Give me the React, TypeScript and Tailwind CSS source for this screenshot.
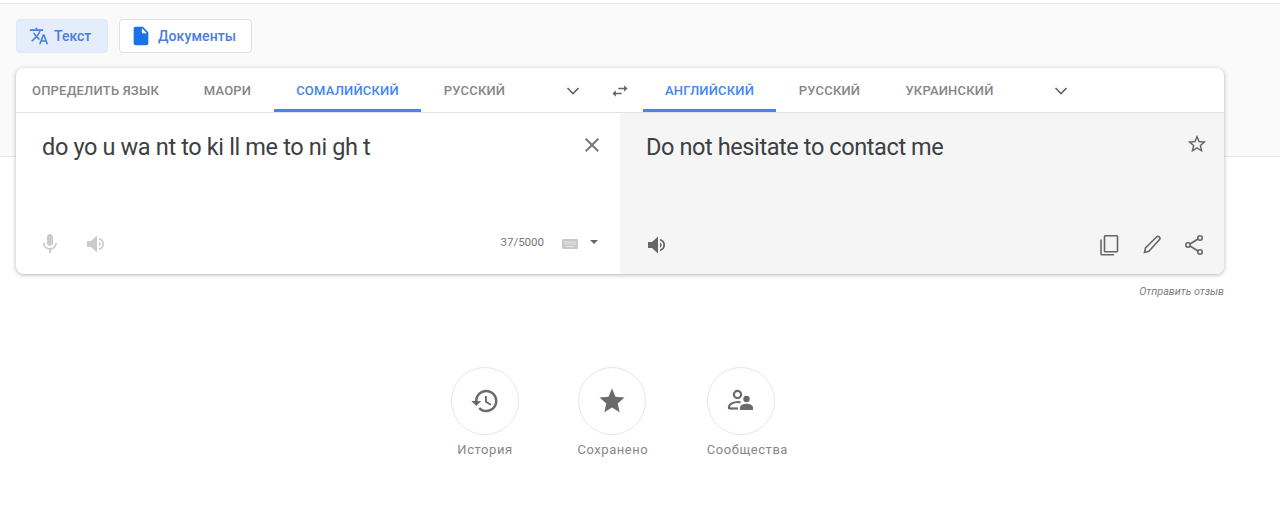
const Ic = ({ d, size = 24, cls = "", vb = "0 0 24 24" }: { d: string; size?: number; cls?: string; vb?: string }) => (
  <svg width={size} height={size} viewBox={vb} fill="currentColor" fillRule="evenodd" className={"shrink-0 " + cls}>
    <path d={d} />
  </svg>
);

const P = {
  translate: "M12.87 15.07l-2.54-2.51.03-.03c1.74-1.94 2.98-4.17 3.71-6.53H17V4h-7V2H8v2H1v1.99h11.17C11.5 7.92 10.42 9.75 9 11.35 8.07 10.32 7.3 9.19 6.69 8h-2c.73 1.63 1.73 3.17 2.98 4.56l-5.09 5.02L4 19l5-5 3.11 3.11.76-2.04zM18.5 10h-2L12 22h2l1.12-3h4.75L21 22h2l-4.5-12zm-2.62 7l1.62-4.33L19.12 17h-3.24z",
  doc: "M14 2H6c-1.1 0-1.99.9-1.99 2L4 20c0 1.1.89 2 1.99 2H18c1.1 0 2-.9 2-2V8l-6-6zm-1 7V3.5L18.5 9H13z",
  swap: "M6.99 11L3 15l3.99 4v-3H14v-2H6.99v-3zM21 9l-3.99-4v3H10v2h7.01v3L21 9z",
  close: "M19 6.41L17.59 5 12 10.59 6.41 5 5 6.41 10.59 12 5 17.59 6.41 19 12 13.41 17.59 19 19 17.59 13.41 12z",
  star: "M22 9.24l-7.19-.62L12 2 9.19 8.63 2 9.24l5.46 4.73L5.82 21 12 17.27 18.18 21l-1.63-7.03L22 9.24zM12 15.4l-3.76 2.27 1-4.28-3.32-2.88 4.38-.38L12 6.1l1.71 4.04 4.38.38-3.32 2.88 1 4.28L12 15.4z",
  starFill: "M12 17.27L18.18 21l-1.64-7.03L22 9.24l-7.19-.61L12 2 9.19 8.63 2 9.24l5.46 4.73L5.82 21z",
  mic: "M12 14c1.66 0 2.99-1.34 2.99-3L15 5c0-1.66-1.34-3-3-3S9 3.34 9 5v6c0 1.66 1.34 3 3 3zm5.3-3c0 3-2.54 5.1-5.3 5.1S6.7 14 6.7 11H5c0 3.41 2.72 6.23 6 6.72V21h2v-3.28c3.28-.48 6-3.3 6-6.72h-1.7z",
  vol: "M2 9v6h4l6 5.5V3.5L6 9H2zm12-3.2v1.8c2 .7 3.3 2.4 3.3 4.4s-1.3 3.7-3.3 4.4v1.8c3-.8 5.1-3.3 5.1-6.2S17 6.6 14 5.8zm0 3.6v5.2c1-.5 1.6-1.5 1.6-2.6S15 9.9 14 9.4z",
  history: "M13 3c-4.97 0-9 4.03-9 9H1l3.89 3.89.07.14L9 12H6c0-3.87 3.13-7 7-7s7 3.13 7 7-3.13 7-7 7c-1.93 0-3.68-.79-4.94-2.06l-1.42 1.42C8.27 19.99 10.51 21 13 21c4.97 0 9-4.03 9-9s-4.03-9-9-9zm-1 5v5l4.28 2.54.72-1.21-3.5-2.08V8H12z",
};

const Chevron = () => (
  <svg width="16" height="10" viewBox="0 0 16 10" fill="none" stroke="#5f6368" strokeWidth="1.6" className="shrink-0">
    <path d="M2.5 2l5.5 5.5L13.5 2" />
  </svg>
);

const Tab = ({ label, active, cls = "" }: { label: string; active?: boolean; cls?: string }) => (
  <div
    className={
      "h-full shrink-0 flex items-center justify-center whitespace-nowrap text-[13px] tracking-[0.2px] font-medium border-b-[3px] pt-[4px] " +
      (active ? "text-[#4285f4] border-[#4285f4] " : "text-[#868686] border-transparent ") +
      cls
    }
  >
    {label}
  </div>
);

const Round = ({ label, children }: { label: string; children: React.ReactNode }) => (
  <div className="flex flex-col items-start">
    <div className="w-[68px] h-[68px] rounded-full border border-[#e6e6e6] bg-white flex items-center justify-center text-[#6a6a6a]">
      {children}
    </div>
    <div className="mt-[7px] min-w-[68px] text-center text-[13px] leading-[16px] tracking-[0.55px] text-[#888] whitespace-nowrap">{label}</div>
  </div>
);

export default function App() {
  return (
    <div className="w-[1280px] h-[508px] bg-white overflow-hidden pt-[3px] font-['Roboto',sans-serif]">
      <div className="h-[154px] bg-[#fafafa] border-y border-[#e8e8e8] pt-[15px] px-4">
        <div className="flex gap-[11px] h-[34px]">
          <div className="w-[92px] rounded-[4px] bg-[#e4edfb] border border-[#dfe8f6] flex items-center pl-[12px] gap-[5px] text-[#4a7de0] text-sm">
            <Ic d={P.translate} size={20} />
            <span className="font-medium">Текст</span>
          </div>
          <div className="w-[133px] rounded-[4px] bg-white border border-[#e0e0e0] flex items-center pl-[10px] gap-[6px] text-[#4a7de0] text-sm">
            <Ic d={P.doc} size={22} cls="text-[#1a73e8]" />
            <span className="font-medium tracking-[0.1px]">Документы</span>
          </div>
        </div>

        <div className="mt-[15px] w-[1208px] h-[206px] rounded-lg bg-white shadow-[0_1px_4px_rgba(0,0,0,0.3)] overflow-hidden flex flex-col">
          <div className="h-[45px] shrink-0 border-b border-[#e3e3e3] flex">
            <div className="w-[604px] shrink-0 flex items-center h-full">
              <Tab label="ОПРЕДЕЛИТЬ ЯЗЫК" cls="w-[165px] pr-[6px]" />
              <Tab label="МАОРИ" cls="w-[93px]" />
              <Tab label="СОМАЛИЙСКИЙ" active cls="w-[147px]" />
              <Tab label="РУССКИЙ" cls="w-[107px]" />
              <div className="w-[30px] shrink-0 ml-[30px] flex justify-center pt-[2px]"><Chevron /></div>
              <div className="w-[20px] shrink-0 ml-[22px] text-[#5f6368] pt-[1px]"><Ic d={P.swap} size={20} /></div>
            </div>
            <div className="w-[604px] shrink-0 flex items-center h-full pl-[23px]">
              <Tab label="АНГЛИЙСКИЙ" active cls="w-[133px]" />
              <Tab label="РУССКИЙ" cls="w-[107px]" />
              <Tab label="УКРАИНСКИЙ" cls="w-[133px]" />
              <div className="w-[30px] shrink-0 ml-[30px] flex justify-center pt-[2px]"><Chevron /></div>
            </div>
          </div>

          <div className="flex-1 flex min-h-0">
            <div className="w-[604px] flex flex-col pl-[26px] pr-[16px]">
              <div className="flex justify-between items-start pt-[19px] h-[120px]">
                <div className="text-[23.5px] leading-[30px] tracking-[-0.36px] text-[#3c4043]">do yo u wa nt to ki ll me to ni gh t</div>
                <Ic d={P.close} size={24} cls="text-[#777] mt-[1px]" />
              </div>
              <div className="flex items-center h-[24px] -ml-[2px]">
                <Ic d={P.mic} size={24} cls="-ml-[2px] text-[#ccc] -mt-[2px]" />
                <Ic d={P.vol} size={24} cls="ml-[23px] text-[#ccc] -mt-[2px]" />
                <span className="ml-auto text-[11.5px] text-[#777] -mt-[5px]">37/5000</span>
                <svg width="16" height="10" viewBox="0 0 16 10" className="ml-[18px] shrink-0 -mt-[2px]">
                  <rect width="16" height="10" rx="1" fill="#c9c9c9" />
                  <path d="M2 3h12M2 5h12M4 7.5h8" stroke="#efefef" strokeWidth="0.8" />
                </svg>
                <svg width="8" height="4" viewBox="0 0 8 4" className="ml-[12px] mr-[6px] -mt-[7px] shrink-0">
                  <path d="M0 0h8L4 4z" fill="#666" />
                </svg>
              </div>
            </div>
            <div className="w-[604px] bg-[#f5f5f5] flex flex-col pl-[26px] pr-[18px]">
              <div className="flex justify-between items-start pt-[19px] h-[120px]">
                <div className="text-[23.5px] leading-[30px] tracking-[-0.4px] text-[#3c4043]">Do not hesitate to contact me</div>
                <Ic d={P.star} size={22} cls="text-[#666] mt-[1px] -mr-[2px]" />
              </div>
              <div className="flex items-center h-[24px]">
                <Ic d={P.vol} size={24} cls="text-[#666]" />
                <svg width="24" height="24" viewBox="0 0 24 24" fill="none" stroke="#666" strokeWidth="1.6" className="ml-auto shrink-0">
                  <rect x="7.5" y="2.8" width="13" height="16" rx="0.8" />
                  <path d="M4 6.5v14.2c0 .6.4 1 1 1h12" />
                </svg>
                <svg width="24" height="24" viewBox="0 0 24 24" fill="none" stroke="#666" strokeWidth="1.6" className="ml-[19px] shrink-0">
                  <path d="M4.5 19.5l1-4.5L16.5 4c.8-.8 2-.8 2.8 0 .8.8.8 2 0 2.8L8.9 18.3z" />
                </svg>
                <svg width="24" height="24" viewBox="0 0 24 24" fill="none" stroke="#666" strokeWidth="1.6" className="ml-[18px] shrink-0">
                  <circle cx="18" cy="5" r="2.2" />
                  <circle cx="6" cy="12" r="2.2" />
                  <circle cx="18" cy="19" r="2.2" />
                  <path d="M8 11l8-5M8 13l8 5" />
                </svg>
              </div>
            </div>
          </div>
        </div>
      </div>

      <div className="mt-[128px] w-[1224px] text-right text-[10.7px] italic leading-[14px] text-[#808080]">Отправить отзыв</div>

      <div className="mt-[68px] w-[1239px] flex justify-center gap-[58.5px]">
        <Round label="История">
          <Ic d={P.history} size={30} />
        </Round>
        <Round label="Сохранено">
          <Ic d={P.starFill} size={30} />
        </Round>
        <Round label="Сообщества">
          <svg width="30" height="30" viewBox="0 0 30 30" fill="none" className="shrink-0">
            <circle cx="11.5" cy="8.5" r="3.6" stroke="#6a6a6a" strokeWidth="2.2" />
            <path d="M3 23v-2c0-3 5-5 8.5-5 1 0 2 .1 3 .4" stroke="#6a6a6a" strokeWidth="2.2" />
            <path d="M3 22.5h9" stroke="#6a6a6a" strokeWidth="2.2" />
            <circle cx="20.5" cy="13" r="3.2" fill="#6a6a6a" />
            <path d="M14 24v-2.5c0-2.3 3.5-3.8 6.5-3.8s6.5 1.5 6.5 3.8V24z" fill="#6a6a6a" />
          </svg>
        </Round>
      </div>
    </div>
  );
}
